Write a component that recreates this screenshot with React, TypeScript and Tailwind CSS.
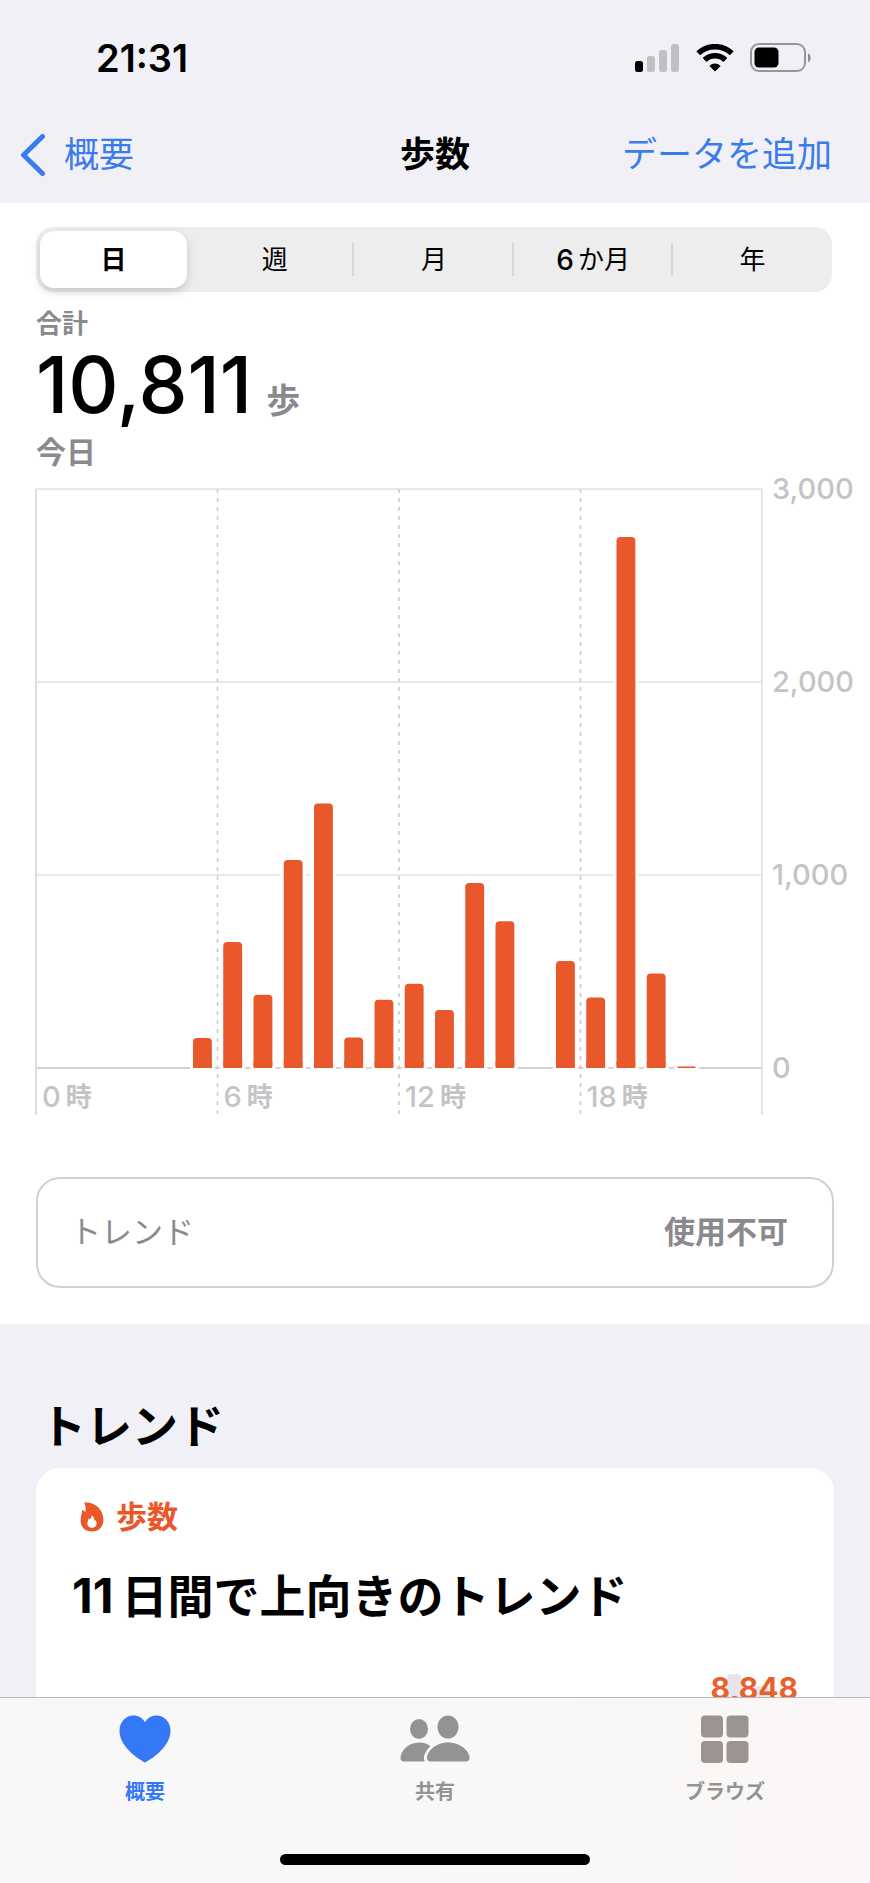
import { useState } from "react";

interface HourlySteps {
  hour: number;
  steps: number;
}

const RANGES = ["日", "週", "月", "6か月", "年"];

const HOURLY: HourlySteps[] = [
  { hour: 5, steps: 156 },
  { hour: 6, steps: 653 },
  { hour: 7, steps: 379 },
  { hour: 8, steps: 1078 },
  { hour: 9, steps: 1370 },
  { hour: 10, steps: 158 },
  { hour: 11, steps: 353 },
  { hour: 12, steps: 436 },
  { hour: 13, steps: 301 },
  { hour: 14, steps: 958 },
  { hour: 15, steps: 760 },
  { hour: 17, steps: 555 },
  { hour: 18, steps: 365 },
  { hour: 19, steps: 2751 },
  { hour: 20, steps: 489 },
  { hour: 21, steps: 8 },
];

const MAX_STEPS = 3000;
const PLOT_HEIGHT = 579;

export default function App() {
  return (
    <div className="flex h-dvh flex-col bg-[#f1f0f6] font-['Inter','Noto_Sans_CJK_JP',sans-serif] text-black">
      <StatusBar />
      <NavBar />
      <main className="min-h-0 flex-1 overflow-y-auto [scrollbar-width:none]">
        <section className="bg-white px-9 pt-6 pb-9">
          <RangePicker />
          <Summary />
          <StepsChart />
          <div className="mt-[62px] flex h-[111px] items-center justify-between rounded-3xl border-2 border-[#d1d1d4] pr-11 pl-8 text-[31px] text-[#8a8a8e]">
            <span>トレンド</span>
            <span className="font-bold">使用不可</span>
          </div>
        </section>
        <section className="px-9">
          <h2 className="px-1 pt-[68px] pb-2 text-[46px] leading-[68px] font-bold">トレンド</h2>
          <TrendCard />
        </section>
      </main>
      <TabBar />
    </div>
  );
}

function StatusBar() {
  return (
    <div className="flex h-[116px] items-center justify-between pr-[58px] pl-24">
      <span className="text-[38px] leading-none font-semibold">21:31</span>
      <div className="flex items-center gap-4">
        <svg width="45" height="28" viewBox="0 0 45 28" aria-hidden="true">
          <rect x="0" y="17" width="8" height="11" rx="2.5" fill="#000" />
          <rect x="12" y="12" width="8" height="16" rx="2.5" fill="#c0bfc4" />
          <rect x="24" y="6" width="8" height="22" rx="2.5" fill="#c0bfc4" />
          <rect x="36" y="0" width="8" height="28" rx="2.5" fill="#c0bfc4" />
        </svg>
        <svg width="38" height="28" viewBox="0 0 38 28" fill="none" stroke="#000" aria-hidden="true">
          <path d="M2.2 9.3A24.5 24.5 0 0 1 35.8 9.3" strokeWidth="5.5" />
          <path d="M8.6 16A15 15 0 0 1 29.4 16" strokeWidth="5.5" />
          <path d="M19 27.6l-5.6-5.7a8 8 0 0 1 11.2 0z" fill="#000" stroke="none" />
        </svg>
        <svg width="62" height="30" viewBox="0 0 62 30" aria-hidden="true">
          <rect x="1" y="1" width="54" height="27" rx="8" fill="none" stroke="#97979b" strokeWidth="2" />
          <rect x="4.5" y="4.5" width="24" height="20" rx="4.5" fill="#000" />
          <path d="M58 10.5c3.5 1 3.5 7.5 0 8.5z" fill="#8d8d91" />
        </svg>
      </div>
    </div>
  );
}

function NavBar() {
  return (
    <header className="grid h-[87px] grid-cols-3 items-center px-5 pb-2.5 text-[35px]">
      <a href="#summary" className="flex items-center gap-[18px] text-[#3a7cec]">
        <svg width="26" height="44" viewBox="0 0 26 44" fill="none" aria-hidden="true">
          <path
            d="M22.5 3.5L3.5 22L22.5 40.5"
            stroke="currentColor"
            strokeWidth="5"
            strokeLinecap="round"
            strokeLinejoin="round"
          />
        </svg>
        概要
      </a>
      <h1 className="text-center font-bold">歩数</h1>
      <button type="button" className="pr-[18px] text-right whitespace-nowrap text-[#3a7cec]">
        データを追加
      </button>
    </header>
  );
}

function RangePicker() {
  const [selected, setSelected] = useState(0);

  return (
    <div className="mr-0.5 grid h-[65px] grid-cols-5 rounded-[18px] bg-[#ededee]">
      {RANGES.map((range, i) => (
        <button
          key={range}
          type="button"
          aria-pressed={i === selected}
          onClick={() => setSelected(i)}
          className={
            "relative py-1 text-[26px] " + (i === selected ? "pr-2 pl-1 font-bold" : "font-normal")
          }
        >
          {i > selected + 1 && (
            <span className="absolute top-4 -left-0.5 h-[33px] w-0.5 bg-[#d6d6d8]" />
          )}
          <span
            className={
              "flex h-full items-center justify-center rounded-[14px] " +
              (i === selected ? "bg-white shadow-[0_4px_10px_rgba(0,0,0,0.16)]" : "")
            }
          >
            {range === "6か月" ? (
              <>
                <span className="mr-1 text-[28px] font-medium">6</span>か月
              </>
            ) : (
              range
            )}
          </span>
        </button>
      ))}
    </div>
  );
}

function Summary() {
  return (
    <div className="mt-3.5 font-bold text-[#8a8a8e]">
      <p className="text-[26px] leading-9">合計</p>
      <p className="flex items-baseline gap-3.5">
        <span className="text-[78px] leading-[86px] font-medium text-black">10,811</span>
        <span className="text-[34px] leading-none">歩</span>
      </p>
      <p className="text-[30px] leading-[48px]">今日</p>
    </div>
  );
}

function StepsChart() {
  return (
    <div className="mt-[13px] -mr-9 flex font-medium text-[#c4c4c6]">
      <div className="relative flex-1">
        <svg className="absolute inset-0 h-full w-full overflow-visible" aria-hidden="true">
          {[0, 1, 2, 3].map((n) => (
            <line
              key={n}
              x1="0"
              x2="100%"
              y1={(PLOT_HEIGHT * n) / 3}
              y2={(PLOT_HEIGHT * n) / 3}
              stroke={n === 3 ? "#d4d4d7" : "#e9e9eb"}
              strokeWidth="2"
            />
          ))}
          <line x1="0" x2="0" y1="0" y2="100%" stroke="#dfdfe2" strokeWidth="2" />
          <line x1="100%" x2="100%" y1="0" y2="100%" stroke="#dfdfe2" strokeWidth="1.5" />
          {["25%", "50%", "75%"].map((x) => (
            <line
              key={x}
              x1={x}
              x2={x}
              y1="0"
              y2="100%"
              stroke="#c9c9cc"
              strokeWidth="1.5"
              strokeDasharray="4 5"
            />
          ))}
          {HOURLY.map(({ hour, steps }) => {
            const height = (steps / MAX_STEPS) * PLOT_HEIGHT;
            const x = `${((hour + 0.19) / 24) * 100}%`;
            return (
              <g key={hour}>
                <rect
                  x={x}
                  y={PLOT_HEIGHT - height}
                  width="2.6%"
                  height={height}
                  fill="#fff"
                  stroke="#fff"
                  strokeWidth="6"
                />
                <rect
                  x={x}
                  y={PLOT_HEIGHT - height}
                  width="2.6%"
                  height={height}
                  rx={Math.min(4, height)}
                  fill="#e9582b"
                />
                {/* 下端は角丸にしない */}
                {height > 8 && (
                  <rect x={x} y={PLOT_HEIGHT - 6} width="2.6%" height="6" fill="#e9582b" />
                )}
              </g>
            );
          })}
        </svg>
        <div className="grid grid-cols-4 pt-[590px] text-[26px] leading-9">
          {[0, 6, 12, 18].map((h) => (
            <span key={h} className="flex items-center gap-[5px] pl-1.5 font-bold">
              <span className="text-[29px] font-medium">{h}</span>時
            </span>
          ))}
        </div>
      </div>
      <div className="-mt-3.5 flex h-[607px] w-[108px] flex-col justify-between pl-2.5 text-[29px] leading-7">
        <span>3,000</span>
        <span>2,000</span>
        <span>1,000</span>
        <span>0</span>
      </div>
    </div>
  );
}

function TrendCard() {
  return (
    <article className="h-[420px] rounded-3xl bg-white px-9 pt-6">
      <p className="flex items-center gap-3 pl-2 text-[31px] leading-[50px] font-bold text-[#e9582b]">
        <svg width="24" height="30" viewBox="0 0 24 30" aria-hidden="true">
          <path
            fill="currentColor"
            fillRule="evenodd"
            d="M4 .6C13.5-.8 23.4 6.5 23.4 17.5 23.4 25 18.5 29.5 12 29.5 5 29.5.6 25 .6 18.5.6 14.5 2 11.5 2.2 8 3.5 8.3 4.6 9.2 5.2 10.3 6.2 7 5.8 3.5 4 .6zM11.5 13C11.8 15.2 10.8 16.5 9.9 17.6 9.6 16.9 9.2 16.5 8.6 16.2 8.5 18 7.4 19.3 7.4 21.5 7.4 24.3 9.3 25.8 11.9 25.8 14.7 25.8 16.6 24 16.6 21.4 16.6 19.8 16 18.7 15.3 17.7 15.2 18.5 14.9 19 14.4 19.4 14.5 16.7 13.5 14.4 11.5 13z"
          />
        </svg>
        歩数
      </p>
      <h3 className="mt-5 flex items-baseline gap-2 text-[46px] leading-[68px] font-bold">
        <span className="text-5xl leading-none">11</span>日間で上向きのトレンド
      </h3>
      <div className="mt-10 flex justify-end">
        <span className="relative text-[30px] leading-9 font-bold text-[#e9602f]">
          <span className="absolute top-1 left-4 h-9 w-3.5 rounded-t bg-[#e5e5ea]" />
          <span className="absolute top-4 left-11 h-6 w-3.5 rounded-t bg-[#e5e5ea]" />
          <span className="relative">8,848</span>
        </span>
      </div>
    </article>
  );
}

function TabBar() {
  return (
    <nav className="border-t border-[#b9b9bb] bg-linear-to-r from-[#f8f8f9] to-[#faf7f6] pt-3.5 pb-[18px] text-xl font-bold text-[#939393]">
      <div className="grid h-[142px] grid-cols-3">
        <a href="#summary" className="flex flex-col items-center gap-3.5 text-[#3578f6]">
          <svg width="52" height="52" viewBox="0 0 52 52" fill="currentColor" aria-hidden="true">
            <path d="M26 50.500C21 48 .5 35.500.5 19 .5 9.500 7 3.500 14.500 3.500 19.500 3.500 23.800 6.200 26 10.300 28.200 6.200 32.500 3.500 37.500 3.500 45 3.500 51.500 9.500 51.500 19 51.500 35.500 31 48 26 50.500z" />
          </svg>
          <span>概要</span>
        </a>
        <a href="#sharing" className="flex flex-col items-center gap-3.5">
          <svg width="70" height="52" viewBox="0 0 70 52" fill="currentColor" aria-hidden="true">
            <ellipse cx="19" cy="17" rx="9" ry="10" />
            <path d="M19 30.5C24 30.5 28 32 30.5 34.2 26.5 37.5 24 42 24 46 24 47.5 24.3 48.7 25 49.5H4C1.5 49.5.5 48 .5 46 .5 39 8 30.5 19 30.5z" />
            <ellipse cx="48" cy="15" rx="10.5" ry="11.5" />
            <path d="M48 30.5C61 30.5 69.5 39.5 69.5 46 69.5 48.3 68.3 49.5 66 49.5H30.5C28 49.5 27 48.3 27 46 27 39.5 35.5 30.5 48 30.5z" />
          </svg>
          <span>共有</span>
        </a>
        <a href="#browse" className="flex flex-col items-center gap-3.5">
          <svg width="48" height="52" viewBox="0 0 48 52" fill="#9b9391" aria-hidden="true">
            <rect x="0" y="3.5" width="22" height="22" rx="4" />
            <rect x="25.5" y="3.5" width="22" height="22" rx="4" />
            <rect x="0" y="29" width="22" height="22" rx="4" />
            <rect x="25.5" y="29" width="22" height="22" rx="4" />
          </svg>
          <span>ブラウズ</span>
        </a>
      </div>
      <div className="mx-auto h-[11px] w-[310px] rounded-full bg-black" />
    </nav>
  );
}
